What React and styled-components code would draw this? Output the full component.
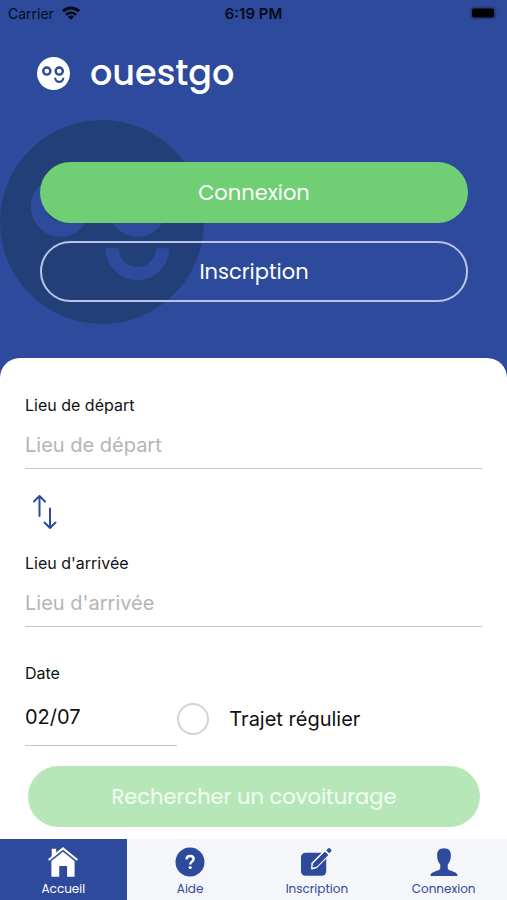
import React, { useState } from 'react';
import styled, { createGlobalStyle } from 'styled-components';

const BLUE = '#2e4a9c';
const NAVY = '#233f77';
const GREEN = '#70cf75';
const LINE = '#c3c5dc';
const TEXT_FONT = `Inter, 'Liberation Sans', sans-serif`;
const BRAND_FONT = `Poppins, 'DejaVu Sans', sans-serif`;

const GlobalStyle = createGlobalStyle`
    * {
        box-sizing: border-box;
    }
    body {
        margin: 0;
        background: ${BLUE};
        font-family: ${TEXT_FONT};
        color: #111;
    }
    button, input {
        font: inherit;
        color: inherit;
    }
`;

const Container = styled.div`
    display: flex;
    flex-direction: column;
    min-height: 100vh;
`;

const StatusBar = styled.div`
    display: grid;
    grid-template-columns: 1fr auto 1fr;
    align-items: center;
    height: 26px;
    padding: 0 8px;
    font-size: 14px;
    color: #06091a;
`;

const StatusLeft = styled.span`
    display: flex;
    align-items: center;
    gap: 8px;
`;

const StatusTime = styled.span`
    font-size: 15px;
    font-weight: 600;
`;

const StatusRight = styled.span`
    display: flex;
    justify-content: flex-end;
`;

const Header = styled.header`
    position: relative;
    padding: 30px 39px 56px 37px;
`;

const Brand = styled.h1`
    position: relative;
    display: flex;
    align-items: center;
    gap: 20px;
    height: 34px;
    margin: 0 0 72px;
    color: #fff;
    font-family: ${BRAND_FONT};
    font-size: 35px;
    font-weight: 500;
    line-height: 34px;
`;

const Watermark = styled.div`
    position: absolute;
    top: 94px;
    left: 0;
    height: 204px;
`;

const HeaderButtons = styled.div`
    position: relative;
    display: flex;
    flex-direction: column;
    gap: 18px;
    padding-left: 3px;
`;

const PillButton = styled.button`
    width: 100%;
    height: 61px;
    padding: 0;
    border: ${({ $outline }) => ($outline ? '2px solid #b9c4ea' : '0')};
    border-radius: 31px;
    background: ${({ $outline }) => ($outline ? 'transparent' : GREEN)};
    color: #fff;
    font-family: ${BRAND_FONT};
    font-size: 21px;
    line-height: 30px;
    cursor: pointer;
    &:disabled {
        background: #b7e7b9;
        color: #f3fcf3;
        cursor: default;
    }
`;

const SearchForm = styled.form`
    flex: 1;
    padding: 35px 25px 12px;
    border-radius: 20px 20px 0 0;
    background: #fff;
`;

const Field = styled.div`
    display: flex;
    flex-direction: column;
`;

const FieldLabel = styled.label`
    font-size: 16px;
    line-height: 24px;
`;

const FieldInput = styled.input`
    width: 100%;
    height: ${({ $tall }) => ($tall ? '61px' : '52px')};
    padding: 4px 0 0;
    border: 0;
    border-bottom: 1px solid ${LINE};
    border-radius: 0;
    outline: 0;
    background: transparent;
    font-size: 20px;
    &::placeholder {
        color: #b5b5b5;
        opacity: 1;
    }
`;

const SwapButton = styled.button`
    display: block;
    margin: 24px 0 22px;
    padding: 0 6px;
    border: 0;
    background: transparent;
    color: ${BLUE};
    line-height: 0;
    cursor: pointer;
`;

const DateRow = styled.div`
    display: grid;
    grid-template-columns: 1fr 2fr;
    align-items: end;
    margin: 34px 0 20px;
`;

const RegularLabel = styled.label`
    display: flex;
    align-items: center;
    gap: 20px;
    height: 54px;
    font-size: 20px;
`;

const RegularCheck = styled.input`
    appearance: none;
    width: 32px;
    height: 32px;
    margin: 0;
    border: 2px solid #d3d3d3;
    border-radius: 50%;
    &:checked {
        background: ${GREEN};
    }
`;

const SubmitBox = styled.div`
    padding: 0 2px 0 3px;
`;

const TabBar = styled.nav`
    display: grid;
    grid-template-columns: repeat(4, 1fr);
    height: 61px;
    background: #f4f6fa;
`;

const Tab = styled.a`
    display: flex;
    flex-direction: column;
    align-items: center;
    gap: 4px;
    padding-top: 8px;
    background: ${({ $active }) => ($active ? BLUE : 'transparent')};
    color: ${({ $active }) => ($active ? '#fff' : BLUE)};
    font-family: ${BRAND_FONT};
    font-size: 12px;
    line-height: 16px;
    text-decoration: none;
`;

const Face = ({ size, color, id }) => (
    <svg width={size} height={size} viewBox="0 0 202 202" aria-hidden="true">
        <mask id={id}>
            <circle cx="101" cy="101" r="101" fill="#fff" />
            <g fill="none" stroke="#000" strokeWidth="15">
                <circle cx="60" cy="86" r="22" />
                <circle cx="136" cy="86" r="22" />
                <path d="M111 127a25 25 0 0 0 50 0" strokeWidth="13" />
            </g>
        </mask>
        <rect width="202" height="202" fill={color} mask={`url(#${id})`} />
    </svg>
);

const WifiIcon = () => (
    <svg width="18" height="14" viewBox="0 0 18 14" fill="none" stroke="currentColor" strokeWidth="3" aria-hidden="true">
        <path d="M1 5.2a11.5 11.5 0 0 1 16 0" />
        <path d="M4 8.8a7 7 0 0 1 10 0" strokeWidth="2.6" />
        <path d="M9 13.8L5.9 10.7a4.4 4.4 0 0 1 6.2 0z" fill="currentColor" stroke="none" />
    </svg>
);

const BatteryIcon = () => (
    <svg width="30" height="14" viewBox="0 0 30 14" aria-hidden="true">
        <rect x="1" y="0.5" width="26" height="13" rx="4" fill="#253c80" />
        <rect x="3" y="2.5" width="22" height="9" rx="2" fill="#000" />
        <path d="M28 5v4c1.6-.6 1.6-3.4 0-4z" fill="#253c80" />
    </svg>
);

const SwapIcon = () => (
    <svg width="26" height="36" viewBox="0 0 26 36" fill="none" stroke="currentColor" strokeWidth="2" strokeLinecap="round" strokeLinejoin="round" aria-hidden="true">
        <path d="M8.5 23V3M3 8.5L8.5 3 14 8.5" />
        <path d="M19 15.5V35M13.500 29.5L19 35l5.5-5.5" />
    </svg>
);

const HomeIcon = () => (
    <svg width="30" height="30" viewBox="0 0 88 88" aria-hidden="true">
        <path d="M11 5h13v13L11 29z" fill="currentColor" />
        <path d="M2 38L44 4l42 34" fill="none" stroke="currentColor" strokeWidth="6" />
        <path d="M10 41L44 14l34 27v46H56V56H33v31H10z" fill="currentColor" />
    </svg>
);

const HelpIcon = () => (
    <svg width="30" height="30" viewBox="0 0 30 30" aria-hidden="true">
        <circle cx="15" cy="15" r="14.5" fill="currentColor" />
        <path d="M11.5 12.3c.2-2.3 1.6-3.3 3.6-3.3 2.2 0 3.5 1.2 3.5 3 0 2.7-3.4 2.6-3.4 5.5" fill="none" stroke="#fff" strokeWidth="2.4" />
        <circle cx="15.2" cy="20.5" r="1.6" fill="#fff" />
    </svg>
);

const EditIcon = () => (
    <svg width="31" height="30" viewBox="0 0 97 88" aria-hidden="true">
        <rect x="0" y="15" width="79" height="72" rx="14" fill="currentColor" />
        <path d="M35 48L83 0l13 13-48 48-14 4z" fill="#f4f6fa" stroke="#f4f6fa" strokeWidth="5" strokeLinejoin="round" />
        <path d="M40 48L75 13l9 9-35 35-12 3z" fill="currentColor" stroke="currentColor" strokeWidth="3" />
        <path d="M79 8l6-6q3-3 6 0l3 3q3 3 0 6l-6 6z" fill="currentColor" />
    </svg>
);

const UserIcon = () => (
    <svg width="28" height="30" viewBox="0 0 82 88" aria-hidden="true">
        <path d="M41 4c-14 0-21 8-20 22 0 13 4 20 9 25v12C28 72 1 70 1 85h80c0-15-27-13-29-22V51c5-5 9-12 9-25C62 12 55 4 41 4z" fill="currentColor" />
    </svg>
);

const tabs = [
    { name: 'Accueil', href: '#accueil', Icon: HomeIcon },
    { name: 'Aide', href: '#aide', Icon: HelpIcon },
    { name: 'Inscription', href: '#inscription', Icon: EditIcon },
    { name: 'Connexion', href: '#connexion', Icon: UserIcon },
];

const App = () => {
    const [departure, setDeparture] = useState('');
    const [arrival, setArrival] = useState('');
    const [date, setDate] = useState('02/07');
    const [regular, setRegular] = useState(false);

    const onChange = (e) => {
        const inputName = e.target.id;
        if (inputName === 'departure') {
            setDeparture(e.target.value);
        }
        if (inputName === 'arrival') {
            setArrival(e.target.value);
        }
        if (inputName === 'date') {
            setDate(e.target.value);
        }
    }

    const onSwap = () => {
        setDeparture(arrival);
        setArrival(departure);
    }

    const onSubmit = (e) => {
        e.preventDefault();
    }

    return (
        <Container>
            <GlobalStyle />
            <StatusBar>
                <StatusLeft>Carrier <WifiIcon /></StatusLeft>
                <StatusTime>6:19 PM</StatusTime>
                <StatusRight><BatteryIcon /></StatusRight>
            </StatusBar>
            <Header>
                <Watermark>
                    <Face size={204} color={NAVY} id="face-back" />
                </Watermark>
                <Brand>
                    <Face size={33} color="#fff" id="face-logo" />
                    ouestgo
                </Brand>
                <HeaderButtons>
                    <PillButton type="button">Connexion</PillButton>
                    <PillButton type="button" $outline>Inscription</PillButton>
                </HeaderButtons>
            </Header>
            <SearchForm onSubmit={onSubmit}>
                <Field>
                    <FieldLabel htmlFor="departure">Lieu de départ</FieldLabel>
                    <FieldInput id="departure" type="text" placeholder="Lieu de départ" onChange={onChange} value={departure} />
                </Field>
                <SwapButton type="button" aria-label="Inverser" onClick={onSwap}>
                    <SwapIcon />
                </SwapButton>
                <Field>
                    <FieldLabel htmlFor="arrival">Lieu d'arrivée</FieldLabel>
                    <FieldInput id="arrival" type="text" placeholder="Lieu d'arrivée" onChange={onChange} value={arrival} />
                </Field>
                <DateRow>
                    <Field>
                        <FieldLabel htmlFor="date">Date</FieldLabel>
                        <FieldInput id="date" type="text" $tall onChange={onChange} value={date} />
                    </Field>
                    <RegularLabel>
                        <RegularCheck type="checkbox" checked={regular} onChange={(e) => setRegular(e.target.checked)} />
                        Trajet régulier
                    </RegularLabel>
                </DateRow>
                <SubmitBox>
                    <PillButton type="submit" disabled={!departure || !arrival}>Rechercher un covoiturage</PillButton>
                </SubmitBox>
            </SearchForm>
            <TabBar>
                {tabs.map(({ name, href, Icon }, i) => (
                    <Tab key={name} href={href} $active={i === 0}>
                        <Icon />
                        {name}
                    </Tab>
                ))}
            </TabBar>
        </Container>
    );
};

export default App;
